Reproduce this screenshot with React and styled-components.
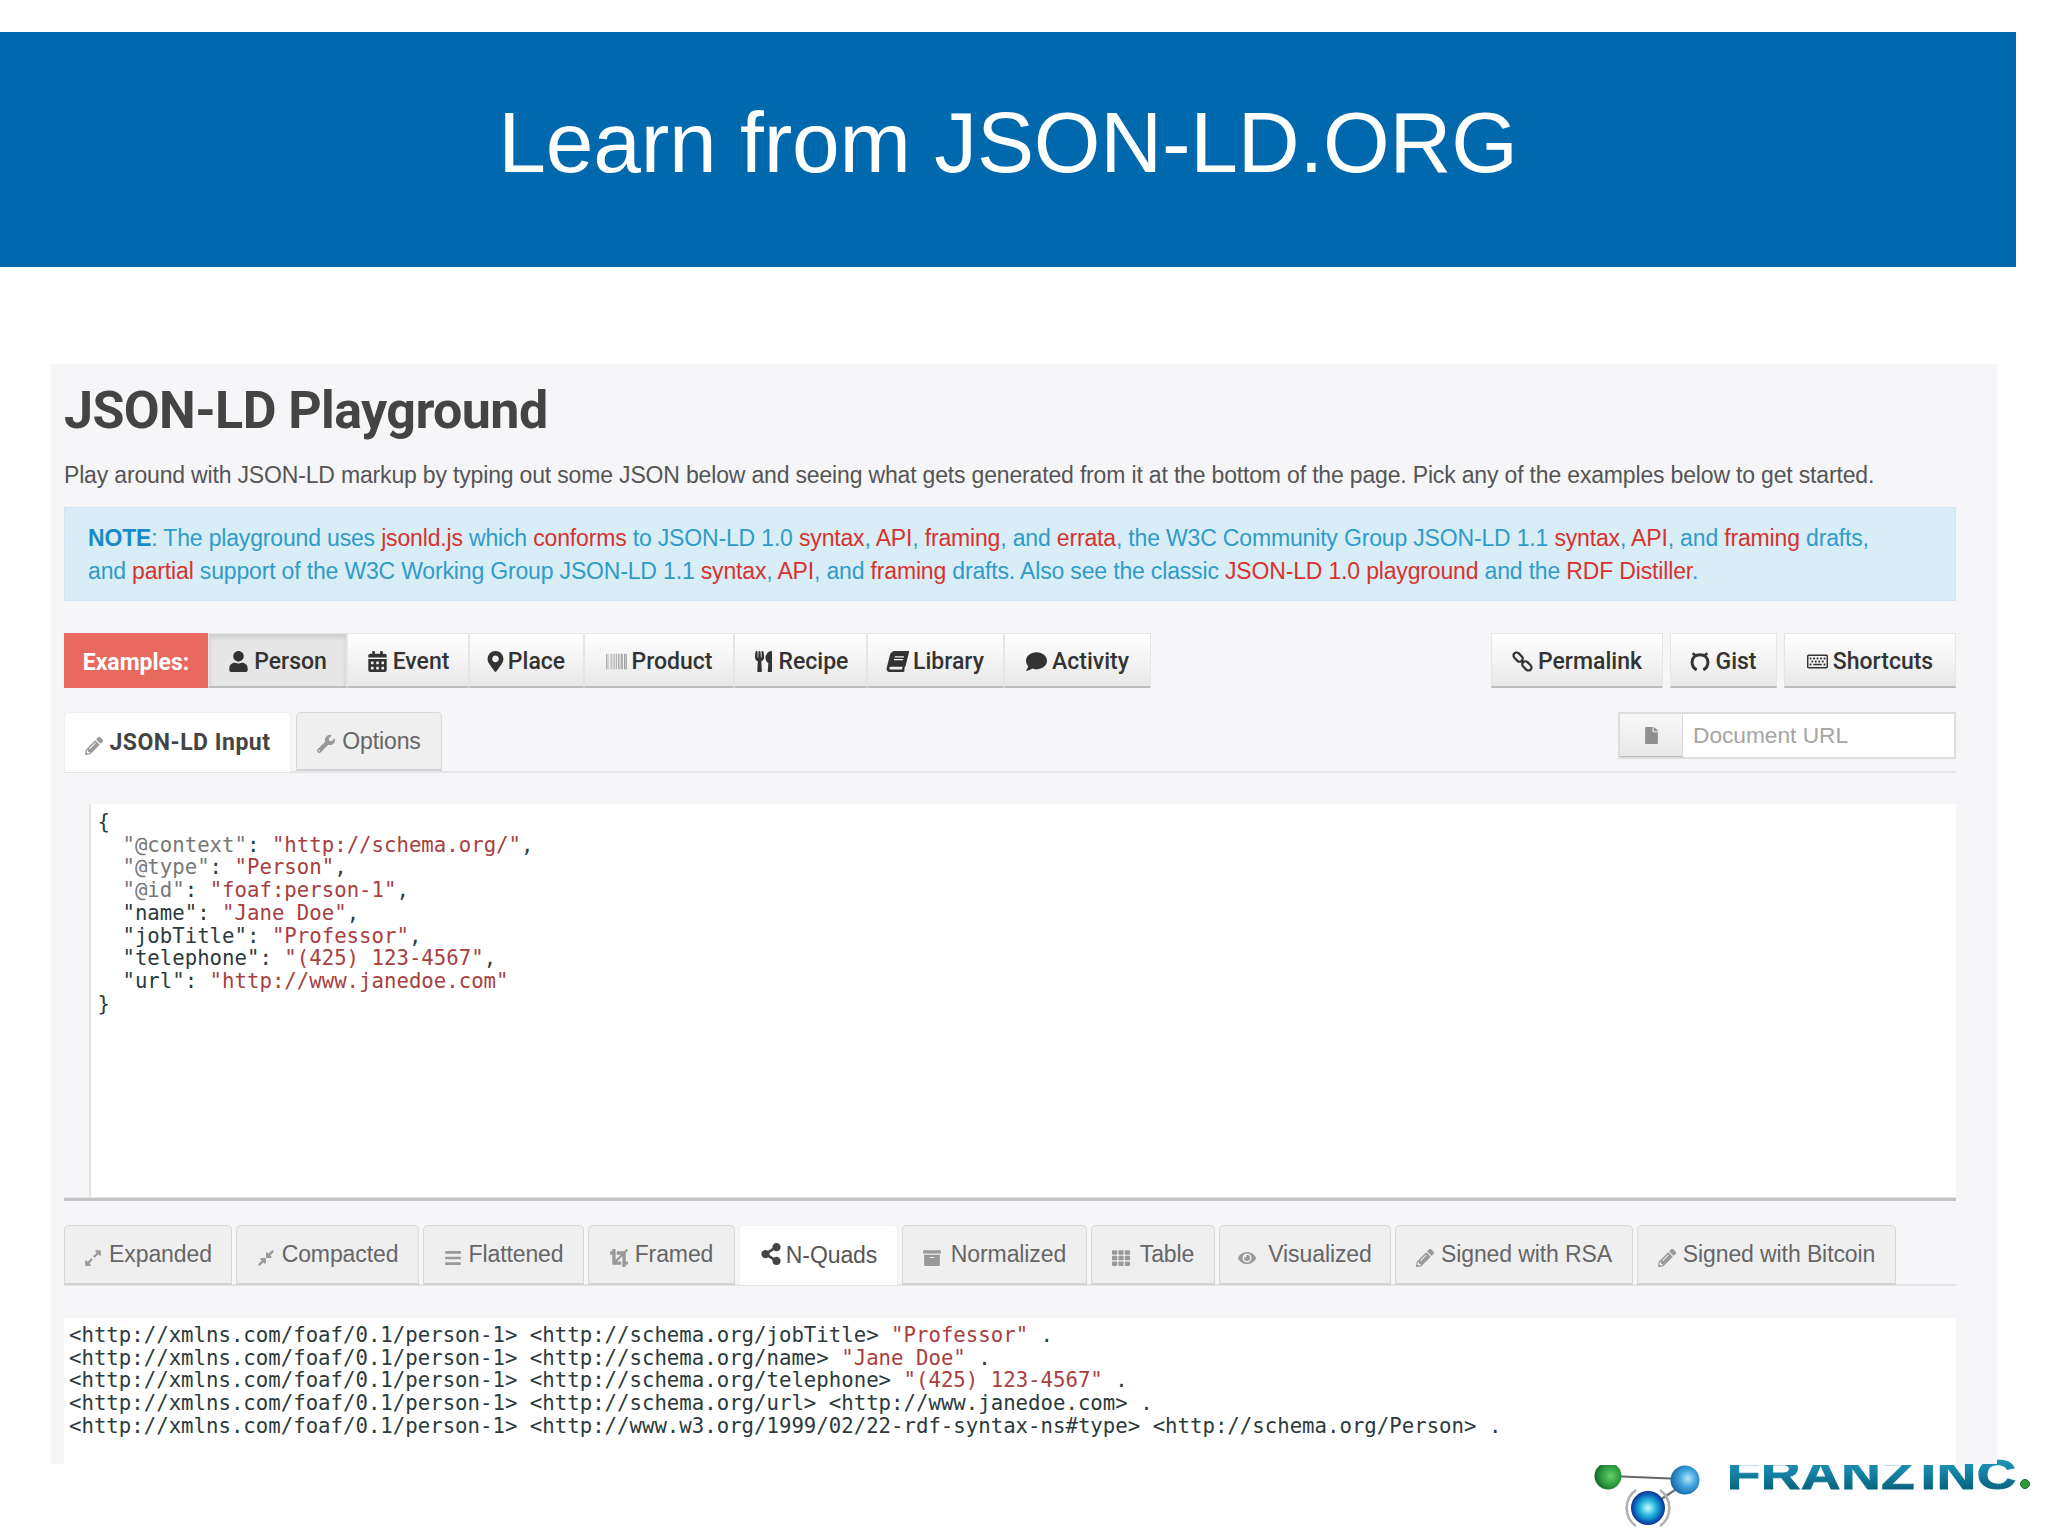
import React from 'react';
import styled, { createGlobalStyle } from 'styled-components';
import {
  FaUser, FaCalendarAlt, FaMapMarkerAlt, FaBarcode, FaUtensils, FaBook, FaComment,
  FaRegKeyboard, FaPencilAlt, FaWrench, FaFile, FaExpandAlt,
  FaCompressAlt, FaBars, FaCrop, FaShareAlt, FaArchive, FaTh, FaEye,
} from 'react-icons/fa';

const GlobalStyle = createGlobalStyle`
  html, body { margin: 0; padding: 0; background: #fefefe; }
  body { font-family: "Liberation Sans", Arial, sans-serif; }
`;

const Slide = styled.div`
  position: relative;
  width: 2048px;
  height: 1536px;
  padding-top: 32px;
  box-sizing: border-box;
  overflow: hidden;
`;

const Banner = styled.header`
  width: 2016px;
  height: 235px;
  background: #0069ad;
  color: #fff;
  display: flex;
  align-items: center;
  justify-content: center;
  font-size: 85.7px;
  letter-spacing: -0.2px;
  padding-bottom: 14px;
  box-sizing: border-box;
`;

const Panel = styled.main`
  position: relative;
  z-index: 1;
  width: 1946px;
  height: 1100px;
  margin: 97px 0 0 51px;
  padding: 0 41px 0 13px;
  box-sizing: border-box;
  background: #f6f6f8;
  color: #444;
`;

const Title = styled.h1`
  margin: 0;
  padding-top: 14px;
  height: 69px;
  font: 700 52px/66px Roboto, sans-serif;
  letter-spacing: -0.6px;
  color: #444;
`;

const Lead = styled.p`
  margin: 0;
  padding-top: 13px;
  height: 47px;
  font-size: 23px;
  line-height: 30px;
  letter-spacing: -0.17px;
  color: #555;
  white-space: nowrap;
`;

const Note = styled.div`
  height: 94px;
  padding: 14px 23px 0;
  box-sizing: border-box;
  background: #d9edf7;
  border: 1px solid #cfe6f1;
  color: #2f9bc9;
  font-size: 23px;
  line-height: 32.5px;
  letter-spacing: -0.165px;
  white-space: nowrap;

  strong { color: #1a8ac6; }
`;

const Hot = styled.span`
  color: #d8322d;
`;

const ToolRow = styled.div`
  display: flex;
  justify-content: space-between;
  margin-top: 32px;
  height: 55px;
`;

const ButtonGroup = styled.div`
  display: flex;
  gap: ${props => props.$gap || 0}px;
`;

const ExamplesLabel = styled.div`
  width: 144px;
  padding-top: 3px;
  box-sizing: border-box;
  display: flex;
  align-items: center;
  justify-content: center;
  background: #e8695e;
  color: #fff;
  font: 700 23px Roboto, sans-serif;
`;

const ToolButton = styled.div`
  width: ${props => props.$w}px;
  padding-top: 3px;
  display: flex;
  align-items: center;
  justify-content: center;
  gap: 5px;
  box-sizing: border-box;
  border: 1px solid #e6e6e6;
  border-bottom: 2px solid #bdbdbd;
  background: ${props => props.$active
    ? '#e6e6e6'
    : 'linear-gradient(to bottom, #ffffff, #e8e8e8)'};
  box-shadow: ${props => props.$active ? 'inset 0 3px 5px rgba(0,0,0,0.12)' : 'none'};
  color: #333;
  font: 500 23px Roboto, sans-serif;

  svg { font-size: 21px; color: ${props => props.$iconColor || '#333'}; }
`;

const SlantedBook = styled(FaBook)`
  transform: skewX(-14deg);
`;

const NarrowMarker = styled(FaMapMarkerAlt)`
  margin: 0 -3px;
`;

const TabBar = styled.div`
  display: flex;
  justify-content: space-between;
  align-items: flex-start;
  margin-top: ${props => props.$top}px;
  height: ${props => props.$h}px;
  border-bottom: 2px solid #e4e4e6;
`;

const Tabs = styled.div`
  display: flex;
  gap: ${props => props.$gap}px;
`;

const Tab = styled.div`
  width: ${props => props.$w}px;
  height: ${props => props.$h}px;
  display: flex;
  align-items: center;
  justify-content: center;
  gap: ${props => props.$iconGap || (props.$active && !props.$bold ? 4 : 7)}px;
  box-sizing: border-box;
  border: 1px solid ${props => props.$active ? '#f0f0f0' : '#d8d8d8'};
  border-bottom: ${props => props.$active ? 'none' : '2px solid #d2d2d4'};
  border-radius: 5px 5px 0 0;
  background: ${props => props.$active ? '#fff' : '#efeff0'};
  color: ${props => props.$active && props.$bold ? '#444' : props.$active ? '#555' : '#666'};
  font: ${props => props.$bold
    ? '700 23px Roboto, sans-serif'
    : '23px "Liberation Sans", Arial, sans-serif'};
  letter-spacing: ${props => props.$bold ? '0.5px' : '-0.1px'};

  svg {
    font-size: ${props => props.$active && !props.$bold ? 22 : 18}px;
    color: ${props => props.$active && !props.$bold ? '#444' : '#999'};
    position: relative;
    top: ${props => props.$active && !props.$bold ? -2 : 3}px;
  }
`;

const UrlField = styled.div`
  width: 338px;
  height: 47px;
  display: flex;
  box-sizing: border-box;
  border: 2px solid #dedede;
  background: #fff;
`;

const UrlAddon = styled.div`
  width: 62px;
  display: flex;
  align-items: center;
  justify-content: center;
  background: linear-gradient(to bottom, #f8f8f8, #e8e8e8);
  border-right: 1px solid #dcdcdc;
  border-bottom: 1px solid #bbb;

  svg { font-size: 17px; color: #8f8f8f; }
`;

const UrlPlaceholder = styled.div`
  display: flex;
  align-items: center;
  padding-left: 10px;
  color: #a5a5a5;
  font-size: 22.7px;
`;

const CodeBlock = styled.pre`
  margin: ${props => props.$top}px 0 0 ${props => props.$left}px;
  height: ${props => props.$h}px;
  padding: ${props => props.$pad};
  box-sizing: border-box;
  background: #fff;
  border-left: ${props => props.$gutter ? '2px solid #e3e3e3' : 'none'};
  font: 20.7px/22.7px "DejaVu Sans Mono", monospace;
  color: #2c3a3c;
  white-space: pre;
  overflow: hidden;
`;

const Str = styled.span`
  color: #a8403f;
`;

const Meta = styled.span`
  color: #777;
`;

const Divider = styled.div`
  height: 3px;
  background: #c4c4c6;
  border-top: 1px solid #e4e4e4;
`;

// sits behind the panel, which cuts off the top of the wordmark like in the slide
const LogoMark = styled.div`
  position: absolute;
  left: 1590px;
  top: 1440px;
  width: 445px;
  height: 96px;
`;

const LogoText = styled.span`
  position: absolute;
  left: 137px;
  top: 10px;
  font: 700 43px/48px "Liberation Sans", sans-serif;
  letter-spacing: 0.5px;
  word-spacing: -8px;
  white-space: nowrap;
  transform: scaleX(1.27);
  transform-origin: left top;
  background: linear-gradient(to bottom, #2a9cc6 0%, #1684a8 45%, #005468 100%);
  -webkit-background-clip: text;
  background-clip: text;
  color: transparent;
  -webkit-text-stroke: 1px transparent;
`;

const LinkIcon = () => (
  <svg width="21" height="21" viewBox="0 0 24 24" fill="none" stroke="#333" strokeWidth="2.6">
    <rect x="1" y="3.5" width="12" height="7" rx="3.5" transform="rotate(45 7 7)" />
    <rect x="11" y="13.5" width="12" height="7" rx="3.5" transform="rotate(45 17 17)" />
  </svg>
);

const GistIcon = () => (
  <svg width="20" height="21" viewBox="0 0 24 24" fill="none" stroke="#333" strokeWidth="3.6">
    <path d="M8 22 C4 20 2.5 16 2.5 13 C2.5 7.5 6.5 4 12 4 C17.5 4 21.500 7.5 21.500 13 C21.500 16 20 20 16 22" />
    <path d="M3 2 L7 5 M21 2 L17 5" strokeWidth="3" />
  </svg>
);

const Logo = () => (
  <LogoMark>
    <svg width="445" height="96" viewBox="0 0 445 96">
      <defs>
        <radialGradient id="greenBall" cx="0.6" cy="0.5" r="0.6">
          <stop offset="0" stopColor="#5fd06a" />
          <stop offset="0.6" stopColor="#2e9a3e" />
          <stop offset="1" stopColor="#14672a" />
        </radialGradient>
        <radialGradient id="blueBall" cx="0.6" cy="0.45" r="0.6">
          <stop offset="0" stopColor="#b5e4f5" />
          <stop offset="0.5" stopColor="#3ea3dc" />
          <stop offset="1" stopColor="#1668a8" />
        </radialGradient>
        <radialGradient id="ringBall" cx="0.5" cy="0.5" r="0.55">
          <stop offset="0" stopColor="#c9fbff" />
          <stop offset="0.45" stopColor="#1cb2da" />
          <stop offset="0.8" stopColor="#0b4fae" />
          <stop offset="1" stopColor="#10187a" />
        </radialGradient>
      </defs>
      <line x1="20" y1="36" x2="92" y2="39" stroke="#666" strokeWidth="2" />
      <line x1="88" y1="48" x2="70" y2="60" stroke="#777" strokeWidth="2.5" />
      <path d="M46 50 A22 22 0 0 0 46 86 M70 50 A22 22 0 0 1 70 86" fill="none" stroke="#b0b0b0" strokeWidth="2.5" />
      <circle cx="58" cy="68" r="17" fill="url(#ringBall)" />
      <circle cx="18" cy="36" r="13.5" fill="url(#greenBall)" />
      <circle cx="95" cy="40" r="14.5" fill="url(#blueBall)" />
      <circle cx="435" cy="44" r="4.5" fill="#2f9a3e" stroke="#1b6a2c" strokeWidth="1" />
    </svg>
    <LogoText>FRANZ INC</LogoText>
  </LogoMark>
);

const EXAMPLES = [
  { label: 'Person', w: 139, icon: <FaUser />, active: true },
  { label: 'Event', w: 122, icon: <FaCalendarAlt /> },
  { label: 'Place', w: 115, icon: <NarrowMarker /> },
  { label: 'Product', w: 150, icon: <FaBarcode />, iconColor: '#999' },
  { label: 'Recipe', w: 133, icon: <FaUtensils /> },
  { label: 'Library', w: 137, icon: <SlantedBook /> },
  { label: 'Activity', w: 147, icon: <FaComment /> },
];

const ACTIONS = [
  { label: 'Permalink', w: 172, icon: <LinkIcon /> },
  { label: 'Gist', w: 107, icon: <GistIcon /> },
  { label: 'Shortcuts', w: 172, icon: <FaRegKeyboard /> },
];

const OUTPUT_TABS = [
  { label: 'Expanded', w: 168, Icon: FaExpandAlt },
  { label: 'Compacted', w: 183, Icon: FaCompressAlt },
  { label: 'Flattened', w: 161, Icon: FaBars },
  { label: 'Framed', w: 147, Icon: FaCrop },
  { label: 'N-Quads', w: 159, Icon: FaShareAlt, active: true },
  { label: 'Normalized', w: 185, Icon: FaArchive, iconGap: 10 },
  { label: 'Table', w: 124, Icon: FaTh, iconGap: 10 },
  { label: 'Visualized', w: 172, Icon: FaEye, iconGap: 12 },
  { label: 'Signed with RSA', w: 238, Icon: FaPencilAlt },
  { label: 'Signed with Bitcoin', w: 259, Icon: FaPencilAlt },
];

const SUBJECT = '<http://xmlns.com/foaf/0.1/person-1>';

const App = () => (
  <Slide>
    <GlobalStyle />
    <Banner>Learn from JSON-LD.ORG</Banner>
    <Logo />
    <Panel>
      <Title>JSON-LD Playground</Title>
      <Lead>Play around with JSON-LD markup by typing out some JSON below and seeing what gets generated from it at the bottom of the page. Pick any of the examples below to get started.</Lead>
      <Note>
        <strong>NOTE</strong>: The playground uses <Hot>jsonld.js</Hot> which <Hot>conforms</Hot> to JSON-LD 1.0 <Hot>syntax</Hot>, <Hot>API</Hot>, <Hot>framing</Hot>, and <Hot>errata</Hot>, the W3C Community Group JSON-LD 1.1 <Hot>syntax</Hot>, <Hot>API</Hot>, and <Hot>framing</Hot> drafts,
        <br />
        and <Hot>partial</Hot> support of the W3C Working Group JSON-LD 1.1 <Hot>syntax</Hot>, <Hot>API</Hot>, and <Hot>framing</Hot> drafts. Also see the classic <Hot>JSON-LD 1.0 playground</Hot> and the <Hot>RDF Distiller</Hot>.
      </Note>

      <ToolRow>
        <ButtonGroup>
          <ExamplesLabel>Examples:</ExamplesLabel>
          {EXAMPLES.map(({ label, w, icon, active, iconColor }) => (
            <ToolButton key={label} $w={w} $active={active} $iconColor={iconColor}>
              {icon}{label}
            </ToolButton>
          ))}
        </ButtonGroup>
        <ButtonGroup $gap={7}>
          {ACTIONS.map(({ label, w, icon }) => (
            <ToolButton key={label} $w={w}>
              {icon}{label}
            </ToolButton>
          ))}
        </ButtonGroup>
      </ToolRow>

      <TabBar $top={24} $h={59}>
        <Tabs $gap={5}>
          <Tab $w={227} $h={60} $active $bold><FaPencilAlt />JSON-LD Input</Tab>
          <Tab $w={146} $h={59}><FaWrench />Options</Tab>
        </Tabs>
        <UrlField>
          <UrlAddon><FaFile /></UrlAddon>
          <UrlPlaceholder>Document URL</UrlPlaceholder>
        </UrlField>
      </TabBar>

      <CodeBlock $top={31} $left={25} $h={393} $pad="7px 0 0 6.5px" $gutter>
{'{\n'}
{'  '}<Meta>"@context"</Meta>: <Str>"http://schema.org/"</Str>,{'\n'}
{'  '}<Meta>"@type"</Meta>: <Str>"Person"</Str>,{'\n'}
{'  '}<Meta>"@id"</Meta>: <Str>"foaf:person-1"</Str>,{'\n'}
{'  '}"name": <Str>"Jane Doe"</Str>,{'\n'}
{'  '}"jobTitle": <Str>"Professor"</Str>,{'\n'}
{'  '}"telephone": <Str>"(425) 123-4567"</Str>,{'\n'}
{'  '}"url": <Str>"http://www.janedoe.com"</Str>{'\n'}
{'}'}
      </CodeBlock>
      <Divider />

      <TabBar $top={24} $h={59}>
        <Tabs $gap={4}>
          {OUTPUT_TABS.map(({ label, w, Icon, active, iconGap }) => (
            <Tab key={label} $w={w} $h={60} $active={active} $iconGap={iconGap}>
              <Icon />{label}
            </Tab>
          ))}
        </Tabs>
      </TabBar>

      <CodeBlock $top={32} $left={0} $h={147} $pad="6px 0 0 5px">
{SUBJECT} {'<http://schema.org/jobTitle>'} <Str>"Professor"</Str> .{'\n'}
{SUBJECT} {'<http://schema.org/name>'} <Str>"Jane Doe"</Str> .{'\n'}
{SUBJECT} {'<http://schema.org/telephone>'} <Str>"(425) 123-4567"</Str> .{'\n'}
{SUBJECT} {'<http://schema.org/url>'} {'<http://www.janedoe.com>'} .{'\n'}
{SUBJECT} {'<http://www.w3.org/1999/02/22-rdf-syntax-ns#type>'} {'<http://schema.org/Person>'} .
      </CodeBlock>
    </Panel>
  </Slide>
);

export default App;
